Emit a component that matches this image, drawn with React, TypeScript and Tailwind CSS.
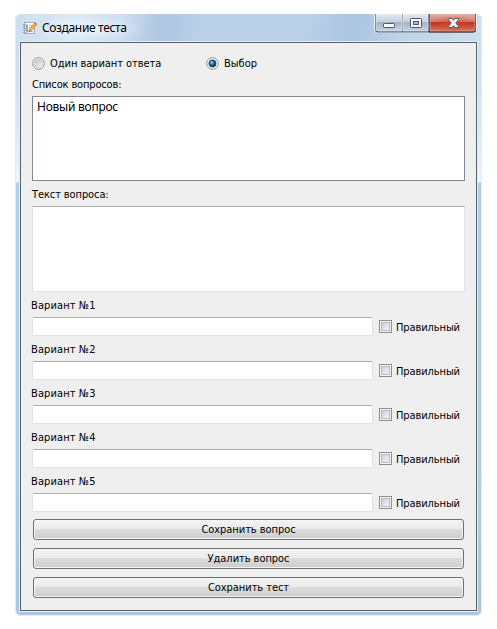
import type { ReactNode } from "react";

const ui = "font-['DejaVu_Sans_Condensed','DejaVu_Sans',sans-serif] text-[11px]";

function Label({ children, className = "" }: { children: ReactNode; className?: string }) {
  return <div className={`h-4 pt-px leading-4 whitespace-nowrap ${className}`}>{children}</div>;
}

function Radio({ checked = false }: { checked?: boolean }) {
  return (
    <svg width="13" height="13" viewBox="0 0 13 13" className="shrink-0">
      <defs>
        <linearGradient id="radioFace" x1="0" y1="0" x2="1" y2="1">
          <stop offset="0" stopColor="#bfc2c5" />
          <stop offset="1" stopColor="#f8f8f8" />
        </linearGradient>
        <radialGradient id="radioDot" cx=".38" cy=".35" r=".65">
          <stop offset="0" stopColor="#a8e4f8" />
          <stop offset=".4" stopColor="#2786b4" />
          <stop offset="1" stopColor="#0b2946" />
        </radialGradient>
      </defs>
      <circle cx="6.5" cy="6.5" r="5.8" fill="#f8f8f8" stroke="#8e8f8f" />
      <circle cx="6.5" cy="6.5" r="4" fill="url(#radioFace)" stroke="#c2c4c6" strokeWidth=".7" />
      {checked && <circle cx="6.5" cy="6.5" r="3.4" fill="url(#radioDot)" stroke="#17364f" strokeWidth=".8" />}
    </svg>
  );
}

function Checkbox() {
  return (
    <div className="size-[13px] shrink-0 border border-[#8e8f8f] bg-[#f4f4f4] p-px">
      <div className="size-[9px] border border-[#b6babf] bg-linear-to-br from-[#cbcfd5] to-[#f6f6f6]" />
    </div>
  );
}

function Variant({ n }: { n: number }) {
  return (
    <div className="h-11">
      <Label className="-ml-px tracking-[0.1px]">Вариант №{n}</Label>
      <div className="mt-1 flex h-[19px] items-center">
        <div className="h-[19px] w-[341px] rounded-[2px] border border-[#e2e3ea] border-t-[#abadb3] bg-white" />
        <div className="ml-1.5">
          <Checkbox />
        </div>
        <Label className="ml-1 tracking-[-0.1px]">Правильный</Label>
      </div>
    </div>
  );
}

function PushButton({ children }: { children: ReactNode }) {
  return (
    <button className="mx-px flex h-[21px] items-center justify-center rounded-[3px] border border-[#707070] bg-[linear-gradient(180deg,#f3f3f3_0%,#ebebeb_48%,#dcdcdc_50%,#cdcdcd_100%)] pt-[2px] tracking-[-0.05px] shadow-[inset_0_0_0_1px_#f4f4f4]">
      {children}
    </button>
  );
}

function AppIcon() {
  return (
    <svg width="16" height="16" viewBox="0 0 16 16" className="shrink-0">
      <rect x="2.5" y="2.5" width="10" height="11" fill="#fbfcff" stroke="#a9aaca" />
      <path d="M1 4.5h3M1 6.5h3M1 8.5h3M1 10.5h3M1 12.5h3" stroke="#8d90b2" strokeWidth=".8" />
      <path d="M5 4.5v8" stroke="#4c9b83" strokeWidth="1.4" />
      <path d="M7 5.5h4M7 7.5h3M7 11.5h4" stroke="#a6c9df" />
      <path d="M6.8 11.8l.8-2.9 5.2-6.1 2 1.7-5.2 6.2z" fill="#edb746" stroke="#a8712c" strokeWidth=".6" />
      <path d="M12.2 3.4l1-1.1 2 1.7-1 1.1z" fill="#db6e65" />
      <path d="M6.8 11.8l.5-1.5 1 .8z" fill="#333" />
    </svg>
  );
}

function CaptionButtons() {
  return (
    <svg width="103" height="20" viewBox="0 0 103 20" className="shrink-0">
      <defs>
        <linearGradient id="glass" x1="0" y1="0" x2="0" y2="1">
          <stop offset="0" stopColor="#e4ebf3" />
          <stop offset=".47" stopColor="#c4d0dd" />
          <stop offset=".5" stopColor="#a3b3c5" />
          <stop offset="1" stopColor="#c4d4e5" />
        </linearGradient>
        <linearGradient id="closeFace" x1="0" y1="0" x2="0" y2="1">
          <stop offset="0" stopColor="#e5b0a7" />
          <stop offset=".47" stopColor="#cf7568" />
          <stop offset=".5" stopColor="#b93422" />
          <stop offset="1" stopColor="#d27860" />
        </linearGradient>
        <radialGradient id="closeGlow" cx=".5" cy=".6" r=".5">
          <stop offset="0" stopColor="#e0432a" stopOpacity=".65" />
          <stop offset="1" stopColor="#e0432a" stopOpacity="0" />
        </radialGradient>
      </defs>
      <path d="M0 0h103v15q0 4-4 4H4q-4 0-4-4z" fill="#edf4fb" />
      <path d="M1 0h101v15q0 3.5-3 3.5H4q-3 0-3-3.5z" fill="#53606f" />
      <path d="M2 0h26v17H4q-2 0-2-2z" fill="url(#glass)" stroke="#e3eaf1" strokeWidth=".7" />
      <path d="M29 0h25v17H29z" fill="url(#glass)" stroke="#e3eaf1" strokeWidth=".7" />
      <path d="M55 0h47v15q0 3.5-3 3.5H55z" fill="#571e1b" />
      <path d="M56 0h45v15q0 2-2 2H56z" fill="url(#closeFace)" stroke="#edb9ad" strokeWidth=".7" />
      <path d="M56 0h45v15q0 2-2 2H56z" fill="url(#closeGlow)" />
      <rect x="9.5" y="9.5" width="11" height="4" rx=".7" fill="#f8f8f8" stroke="#555969" />
      <rect x="36.5" y="4.5" width="11" height="9" rx=".7" fill="#f8f8f8" stroke="#555969" />
      <rect x="39.5" y="7.5" width="5" height="3" fill="#abbacb" stroke="#555969" />
      <path d="M74.5 4.5h3.6l1.4 1.8 1.4-1.8h3.6v1L81.8 9l2.7 3.4v1.1h-3.6l-1.4-1.8-1.4 1.8h-3.6v-1.1L77.2 9l-2.7-3.5z" fill="#f8f8f8" stroke="#595a6b" />
    </svg>
  );
}

export default function App() {
  return (
    <div className={`h-[629px] w-[497px] bg-white pt-3.5 pl-[15px] text-black ${ui}`}>
      <div className="h-[602px] w-[467px] rounded-[6px] bg-[linear-gradient(180deg,#c9daec_0px,#d0e0f0_60px,#d9e7f4_110px,#eff5fb_168px,#b3cee8_169px,#b5cee7_440px,#adc6e0_100%)] px-1 shadow-[inset_0_0_0_1px_#dfebf6]">
        <div className="-mx-[3px] flex h-[27px] items-start rounded-t-[6px] bg-[linear-gradient(100deg,#ccdeef_0px,#dce9f5_60px,#cfdff0_105px,#b3cae3_138px,#afc7e1_155px,#b9d0e8_180px,#b9d0e8_290px,#abc4e0_335px,#bdd3e9_380px,#cddeef_100%)] pl-[6px]">
          <div className="mt-[6px]">
            <AppIcon />
          </div>
          <div className="mt-[5px] ml-1 flex-1 bg-[radial-gradient(ellipse_60px_12px_at_43px_9px,rgba(240,246,252,.8),transparent)] font-['Noto_Sans',sans-serif] text-[12px] leading-[18px] tracking-[-0.35px] whitespace-nowrap">
            Создание теста
          </div>
          <div className="mr-1">
            <CaptionButtons />
          </div>
        </div>
        <div className="flex h-[571px] w-[459px] flex-col border border-[#e5eff8]">
          <div className="flex h-[569px] flex-col border border-[#55606e] bg-[#efefef] pr-[11px] pl-[11px]">
            <div className="mt-3 flex h-4 items-center">
              <Radio />
              <Label className="ml-[5px] w-[156px] tracking-[-0.05px]">Один вариант ответа</Label>
              <Radio checked />
              <Label className="ml-[5px]">Выбор</Label>
            </div>
            <Label className="mt-[5px] tracking-[-0.15px]">Список вопросов:</Label>
            <div className="mt-1 h-[85px] w-[433px] border border-[#828790] bg-white pt-[2px] pl-1 font-['Noto_Sans',sans-serif] text-[12px] leading-4 tracking-[-0.25px]">
              Новый вопрос
            </div>
            <Label className="mt-[5px] tracking-[-0.1px]">Текст вопроса:</Label>
            <div className="mt-1 h-[86px] w-[433px] border border-[#e2e3ea] border-t-[#abadb3] bg-white" />
            <div className="mt-[5px]">
              {[1, 2, 3, 4, 5].map((n) => (
                <Variant key={n} n={n} />
              ))}
            </div>
            <div className="mt-[2px] flex w-[433px] flex-col gap-2">
              <PushButton>Сохранить вопрос</PushButton>
              <PushButton>Удалить вопрос</PushButton>
              <PushButton>Сохранить тест</PushButton>
            </div>
          </div>
        </div>
      </div>
    </div>
  );
}
